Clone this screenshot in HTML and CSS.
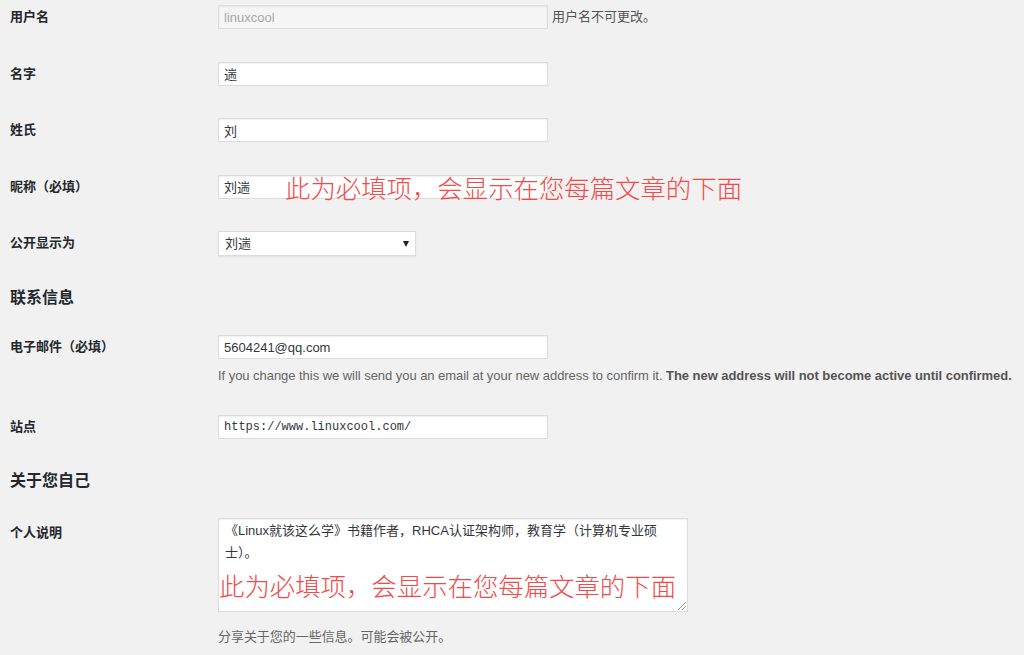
FILE: index.html
```html
<!DOCTYPE html>
<html lang="zh-CN">
<head>
  <meta charset="UTF-8">
  <title>个人资料</title>
  <meta name="viewport" content="width=device-width, initial-scale=1.0">
  <link rel="stylesheet" href="styles.css">
</head>
<body>

<div class="profile">

  <div class="row">
    <div class="label">用户名</div>
    <div class="field">
      <input class="text readonly" type="text" value="linuxcool" readonly>
      <span class="inline-desc">用户名不可更改。</span>
    </div>
  </div>

  <div class="row">
    <div class="label">名字</div>
    <div class="field"><input class="text" type="text" value="遄"></div>
  </div>

  <div class="row">
    <div class="label">姓氏</div>
    <div class="field"><input class="text" type="text" value="刘"></div>
  </div>

  <div class="row">
    <div class="label">昵称（必填）</div>
    <div class="field">
      <input class="text" type="text" value="刘遄">
      <span class="note note-nick">此为必填项，会显示在您每篇文章的下面</span>
    </div>
  </div>

  <div class="row last">
    <div class="label">公开显示为</div>
    <div class="field">
      <div class="select">刘遄<span class="arrow"></span></div>
    </div>
  </div>

  <h2>联系信息</h2>

  <div class="row email">
    <div class="label">电子邮件（必填）</div>
    <div class="field">
      <input class="text" type="text" value="5604241@qq.com">
      <p class="desc">If you change this we will send you an email at your new address to confirm it. <strong>The new address will not become active until confirmed.</strong></p>
    </div>
  </div>

  <div class="row last">
    <div class="label">站点</div>
    <div class="field"><input class="text mono" type="text" value="https://www.linuxcool.com/"></div>
  </div>

  <h2>关于您自己</h2>

  <div class="row bio">
    <div class="label">个人说明</div>
    <div class="field">
      <div class="textarea">
        《Linux就该这么学》书籍作者，RHCA认证架构师，教育学（计算机专业硕<br>士）。
        <span class="note note-bio">此为必填项，会显示在您每篇文章的下面</span>
        <span class="grip"></span>
      </div>
      <p class="desc">分享关于您的一些信息。可能会被公开。</p>
    </div>
  </div>

</div>

</body>
</html>
```

FILE: styles.css
```css
body {
  margin: 0;
  background: #f1f1f1;
  color: #23282d;
  font-family: "Liberation Sans", "Noto Sans CJK SC", sans-serif;
  font-size: 13px;
}

.profile {
  padding: 5px 10px 0 10px;
}

.row {
  display: flex;
  margin-bottom: 32.5px;
}

.row.last {
  margin-bottom: 30px;
}

.row.email {
  margin-bottom: 29px;
}

.label {
  width: 208px;
  flex-shrink: 0;
  line-height: 24px;
  font-weight: bold;
}

.field {
  position: relative;
  display: flex;
  flex-direction: column;
  align-items: flex-start;
}

.text {
  box-sizing: border-box;
  width: 330px;
  height: 24px;
  margin: 0;
  padding: 0 5px;
  border: 1px solid #ddd;
  background: #fff;
  box-shadow: inset 0 1px 2px rgba(0, 0, 0, 0.07);
  color: #32373c;
  font-family: "Liberation Sans", "Noto Sans CJK SC", sans-serif;
  font-size: 13px;
  outline: none;
}

.text.readonly {
  background: #f5f5f5;
  color: #a8a8a8;
}

.text.mono {
  font-family: "Liberation Mono", monospace;
  font-size: 12px;
}

.inline-desc {
  position: absolute;
  left: 334px;
  top: 0;
  line-height: 24px;
  color: #555;
  white-space: nowrap;
}

.note {
  position: absolute;
  color: #f54848;
  font-family: "Noto Sans CJK SC", sans-serif;
  font-size: 25.4px;
  font-weight: 300;
  line-height: 30px;
  white-space: nowrap;
}

.note-nick {
  left: 67px;
  top: -3px;
}

.select {
  position: relative;
  box-sizing: border-box;
  width: 198px;
  height: 25px;
  padding: 0 6px;
  border: 1px solid #ddd;
  background: #fff;
  box-shadow: 0 1px 2px rgba(0, 0, 0, 0.07);
  line-height: 23px;
  color: #32373c;
}

.select .arrow {
  position: absolute;
  right: 6px;
  top: 9px;
  border-left: 3.5px solid transparent;
  border-right: 3.5px solid transparent;
  border-top: 6px solid #222;
}

h2 {
  margin: 0 0 25px;
  font-size: 16px;
  line-height: 24px;
  font-weight: bold;
  color: #23282d;
}

.desc {
  margin: 7px 0 0;
  line-height: 20px;
  color: #666;
  white-space: nowrap;
  letter-spacing: -0.045px;
}

.desc strong {
  color: #555;
}

.bio .label {
  padding-top: 3px;
}

.textarea {
  position: relative;
  box-sizing: border-box;
  width: 470px;
  height: 94px;
  padding: 1px 6px;
  border: 1px solid #ddd;
  background: #fff;
  box-shadow: inset 0 1px 2px rgba(0, 0, 0, 0.07);
  line-height: 22px;
  color: #32373c;
}

.note-bio {
  left: 0;
  top: 51px;
}

.grip {
  position: absolute;
  right: 1px;
  bottom: 1px;
  width: 8px;
  height: 8px;
  background: linear-gradient(135deg, transparent 45%, #999 45%, #999 52%, transparent 52%, transparent 70%, #999 70%, #999 77%, transparent 77%);
}

.bio .desc {
  margin-top: 15px;
}
```
